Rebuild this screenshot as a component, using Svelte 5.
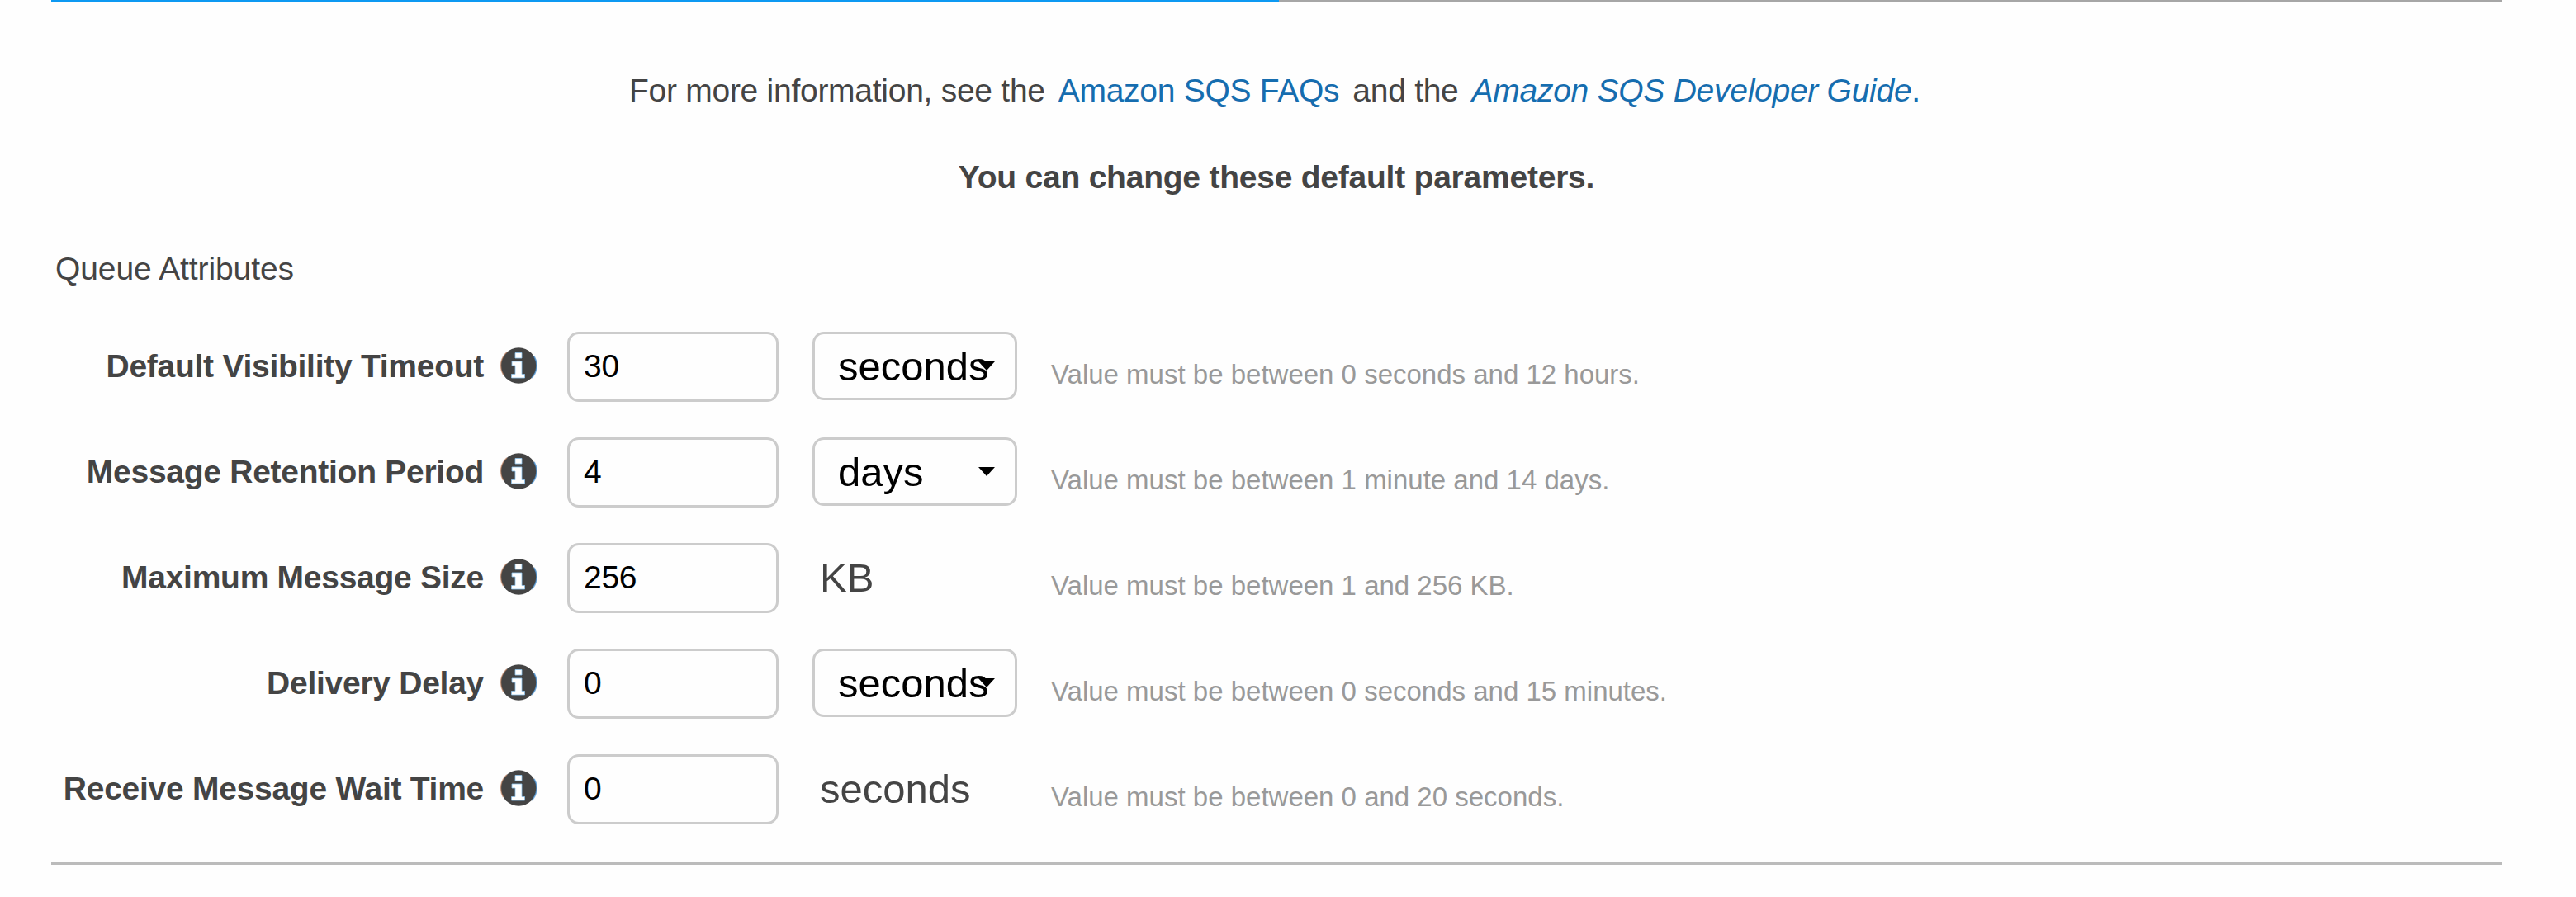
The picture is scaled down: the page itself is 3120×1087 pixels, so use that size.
<script>
  const rows = [
    { label: 'Default Visibility Timeout', value: '30', unit: 'seconds', select: true, hint: 'Value must be between 0 seconds and 12 hours.' },
    { label: 'Message Retention Period', value: '4', unit: 'days', select: true, hint: 'Value must be between 1 minute and 14 days.' },
    { label: 'Maximum Message Size', value: '256', unit: 'KB', select: false, hint: 'Value must be between 1 and 256 KB.' },
    { label: 'Delivery Delay', value: '0', unit: 'seconds', select: true, hint: 'Value must be between 0 seconds and 15 minutes.' },
    { label: 'Receive Message Wait Time', value: '0', unit: 'seconds', select: false, hint: 'Value must be between 0 and 20 seconds.' }
  ];
</script>

<main class="page">
  <div class="tabs"><div class="active"></div></div>
  <p class="intro">
    <span>For more information, see the</span>
    <a class="link" href="#faq">Amazon SQS FAQs</a>
    <span>and the</span>
    <a class="link" href="#guide"><em>Amazon SQS Developer Guide</em>.</a>
  </p>
  <p class="notice">You can change these default parameters.</p>
  <h2 class="title">Queue Attributes</h2>
  <section class="rows">
    {#each rows as row}
      <div class="row">
        <span class="label">{row.label}</span>
        <svg class="info" viewBox="0 0 46 45" aria-hidden="true">
          <circle cx="23.200" cy="23" r="21.700" fill="#444" />
          <path d="M4.500 34A21.700 21.700 0 0 1 9 6.700" fill="none" stroke="#c98560" stroke-width="1.500" opacity=".6" />
          <path d="M42 12A21.700 21.700 0 0 1 39 38" fill="none" stroke="#3f8bd0" stroke-width="1.700" opacity=".7" />
          <path d="M19 7.500H27V14H19ZM15 18H27V33.500H30.500V38H14.500V33.500H19V23H15Z" fill="#fff" stroke="#8fc4ec" stroke-width=".8" />
        </svg>
        <div class="input">{row.value}</div>
        {#if row.select}
          <div class="select">
            <span>{row.unit}</span>
            <svg class="caret" viewBox="0 0 20 11" aria-hidden="true"><path d="M0 0H20L10 11Z" /></svg>
          </div>
        {:else}
          <span class="unit">{row.unit}</span>
        {/if}
        <span class="hint">{row.hint}</span>
      </div>
    {/each}
  </section>
</main>

<style>
  :global(body) { background: #fefefe; overflow: hidden; }
  .page {
    box-sizing: border-box;
    width: 3120px;
    height: 1087px;
    padding: 0 90px 0 62px;
    font-family: "Liberation Sans", Arial, sans-serif;
    font-size: 39px;
    line-height: 44px;
    color: #444;
    white-space: nowrap;
  }
  .tabs { height: 2px; background: #a6a6a6; }
  .active { width: 1487px; height: 2px; background: #0d99f2; }
  .intro { display: flex; gap: 16px; margin: 86px 0 0 700px; letter-spacing: -0.27px; }
  .link { color: #166daf; text-decoration: none; }
  .notice { margin: 61px 0 0; text-align: center; font-weight: 700; letter-spacing: -0.23px; }
  .title { margin: 67px 0 0 5px; font-size: 39px; font-weight: 400; letter-spacing: -0.1px; }
  .rows { margin-top: 54px; height: 643px; border-bottom: 3px solid #bbb; }
  .row {
    display: grid;
    grid-template-columns: 525px 64px 297px 289px auto;
    align-items: start;
    height: 128px;
  }
  .label { margin: 20px 1px 0 0; text-align: right; font-weight: 700; letter-spacing: -0.27px; }
  .info { width: 46px; height: 45px; margin: 18px 0 0 18px; }
  .input {
    box-sizing: border-box;
    width: 256px;
    height: 85px;
    margin-left: 36px;
    padding: 17px 0 0 17px;
    border: 3px solid #ccc;
    border-radius: 14px;
    color: #000;
    letter-spacing: -0.3px;
  }
  .select {
    box-sizing: border-box;
    display: flex;
    width: 248px;
    height: 83px;
    margin-left: 36px;
    padding: 12px 0 0 28px;
    border: 3px solid #ccc;
    border-radius: 14px;
    color: #000;
    font-size: 49px;
    line-height: 54px;
  }
  .select span { width: 170px; }
  .caret { width: 20px; height: 11px; margin-top: 21px; }
  .unit { margin: 15px 0 0 45px; font-size: 49px; line-height: 54px; }
  .hint { margin: 33px 0 0 36px; color: #999; font-size: 33px; line-height: 38px; }
</style>
